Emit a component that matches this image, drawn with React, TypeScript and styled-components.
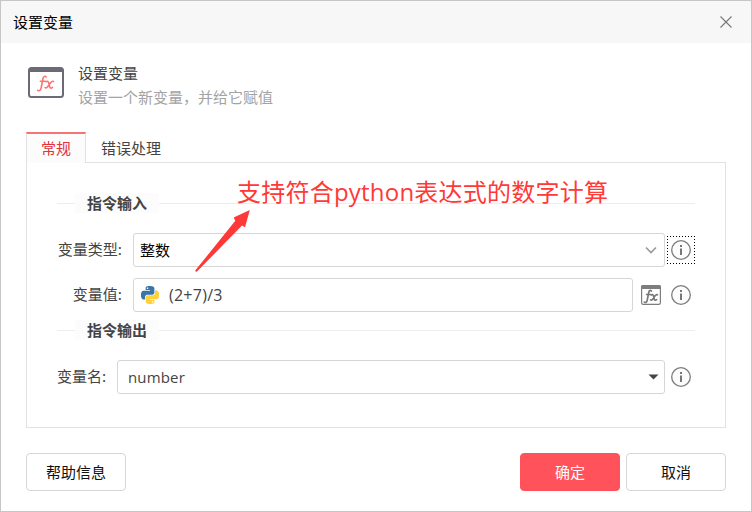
import React from "react";
import styled, { createGlobalStyle } from "styled-components";

const GlobalStyle = createGlobalStyle`
  * { box-sizing: border-box; }
  body { margin: 0; background: #fff; font-family: "Noto Sans", "Noto Sans CJK SC", sans-serif; font-size: 15px; color: #444; }
  button { font: inherit; }
`;

const Dialog = styled.div`
  position: relative;
  width: 752px;
  height: 512px;
  border: 1px solid #c6c6c6;
  background: #fff;
  font-family: "Noto Sans CJK SC", sans-serif;
  line-height: 22px;
  white-space: nowrap;
`;

const TitleBar = styled.header`
  display: flex;
  align-items: center;
  justify-content: space-between;
  height: 42px;
  padding: 0 18px 0 12px;
  background: #f7f7f7;
  color: #000;
`;

const CloseButton = styled.button`
  display: flex;
  padding: 0;
  border: 0;
  background: none;
`;

const Summary = styled.section`
  display: flex;
  gap: 14px;
  height: 88px;
  padding: 19px 0 0 27px;
`;

const SummaryIcon = styled.div`
  padding-top: 5px;
  height: 36px;
`;

const SummaryTitle = styled.div`
  height: 24px;
  color: #444;
`;

const SummaryText = styled.div`
  color: #a3a3a3;
`;

const Tabs = styled.nav`
  display: flex;
  height: 31px;
  margin-left: 25px;
`;

const Tab = styled.div<{ $active?: boolean }>`
  display: flex;
  align-items: center;
  height: 31px;
  padding: 2px 15px 0;
  color: ${(p) => (p.$active ? "#e2303c" : "#444")};
  ${(p) =>
    p.$active &&
    `
    z-index: 1;
    margin-top: 1px;
    padding: 0 14px 1px;
    border: 1px solid #e2e2e2;
    border-top: 2px solid #f47474;
    border-bottom: 0;
    background: #fcfcfc;
  `}
`;

const Panel = styled.main`
  width: 700px;
  height: 266px;
  margin-left: 25px;
  padding: 30px 30px 0;
  border: 1px solid #e2e2e2;
`;

const SectionTitle = styled.div<{ $top?: number }>`
  display: flex;
  align-items: center;
  height: 20px;
  margin-top: ${(p) => p.$top ?? 0}px;
  color: #444;
  font-weight: 700;
  &::before { content: ""; width: 18px; height: 1px; background: #ededed; }
  &::after { content: ""; flex: 1; height: 1px; background: #ededed; }
`;

const SectionLabel = styled.span`
  height: 20px;
  padding: 0 12px;
  background: #fcfcfc;
  line-height: 19px;
`;

const Row = styled.div<{ $top: number }>`
  display: flex;
  align-items: center;
  height: 34px;
  margin-top: ${(p) => p.$top}px;
`;

const Label = styled.label<{ $width: number }>`
  width: ${(p) => p.$width}px;
  padding: 0 11px 2px 0;
  text-align: right;
`;

const Field = styled.div<{ $width: number; $dark?: boolean; $indent: number }>`
  display: flex;
  align-items: center;
  width: ${(p) => p.$width}px;
  height: 34px;
  padding: 0 5px 0 ${(p) => p.$indent}px;
  border: 1px solid #d6d6d6;
  border-radius: 3px;
  color: ${(p) => (p.$dark ? "#000" : "#444")};
`;

const Value = styled.span<{ $latin?: boolean; $numeric?: boolean; $gap?: number }>`
  flex: 1;
  margin-left: ${(p) => p.$gap ?? 0}px;
  font-family: ${(p) => (p.$latin ? `"Open Sans", ` : "")}"Noto Sans CJK SC", sans-serif;
  font-size: ${(p) => (p.$numeric ? 16 : 15)}px;
  letter-spacing: ${(p) => (p.$numeric ? 0.25 : p.$latin ? 0.15 : 0)}px;
`;

const IconButton = styled.button<{ $focused?: boolean; $left?: number }>`
  display: flex;
  align-items: center;
  justify-content: center;
  width: 28px;
  height: 28px;
  margin-left: ${(p) => p.$left ?? 2}px;
  padding: 0;
  border: 1px solid transparent;
  background: none;
  ${(p) =>
    p.$focused &&
    `
    border: 0;
    background:
      repeating-linear-gradient(90deg, #000 0 1.5px, transparent 1.5px 3px) 0 0 / 100% 1px no-repeat,
      repeating-linear-gradient(90deg, #000 0 1.5px, transparent 1.5px 3px) 0 100% / 100% 1px no-repeat,
      repeating-linear-gradient(0deg, #000 0 1.5px, transparent 1.5px 3px) 0 0 / 1px 100% no-repeat,
      repeating-linear-gradient(0deg, #000 0 1.5px, transparent 1.5px 3px) 100% 0 / 1px 100% no-repeat;
  `}
`;

const Footer = styled.footer`
  display: flex;
  gap: 6px;
  margin: 25px 25px 0;
`;

const Button = styled.button<{ $primary?: boolean }>`
  width: 100px;
  height: 38px;
  padding: 0;
  border: 1px solid ${(p) => (p.$primary ? "#ff525b" : "#d6d6d6")};
  border-radius: 4px;
  background: ${(p) => (p.$primary ? "#ff525b" : "#fff")};
  color: ${(p) => (p.$primary ? "#fff" : "#111")};
  font-family: inherit;
  line-height: 22px;
  &:first-child { margin-right: auto; }
`;

const Note = styled.div`
  position: absolute;
  left: 236px;
  top: 173px;
  z-index: 2;
  color: #ff3838;
  font: 24px/36px "Open Sans", "Noto Sans CJK SC", sans-serif;
  letter-spacing: 0.22px;
`;

const NoteArrow = styled.svg`
  position: absolute;
  left: 193px;
  top: 207px;
  z-index: 2;
`;

const InfoIcon = () => (
  <svg width="20" height="20" viewBox="0 0 20 20">
    <circle cx="10" cy="10" r="9.3" fill="#fcfcfc" stroke="#7d7d7d" strokeWidth="1.3" />
    <path d="M9 5h2v2H9zM9 8.5h2V15H9z" fill="#777" />
  </svg>
);

const FxGlyph = ({ scale = 1 }: { scale?: number }) => (
  <g transform={`scale(${scale})`} fill="none" stroke="currentColor" strokeLinecap="round">
    <path d="M9.2 1.5C8 .1 6.5.8 6 3L4.2 12.2C3.8 15 2.2 15.9.7 14.8M3.3 5.7h5" />
    <path d="M9 6.2c1.4-.9 2.3-.2 2.7 1.3l.9 3.6c.4 1.5 1.4 2.1 2.8.8M16.5 5.9c-1.2-.4-2 .2-2.9 1.4l-3 4c-.8 1-1.5 1.4-2.5.8" />
  </g>
);

const FunctionIcon = () => (
  <svg width="36" height="31" viewBox="0 0 36 31" color="#ff7272">
    <rect x="1" y="1" width="34" height="29" rx="2.5" fill="#fff" stroke="#6c6b75" strokeWidth="2" />
    <path d="M1 5V3q0-2 2-2h30q2 0 2 2v2z" fill="#6c6b75" />
    <g transform="translate(9 8.5)" strokeWidth="1.6"><FxGlyph /></g>
  </svg>
);

const ExpressionIcon = () => (
  <svg width="20" height="20" viewBox="0 0 20 20" color="#777">
    <rect x=".6" y=".6" width="18.8" height="18.8" rx="1.6" fill="#fff" stroke="#7d7d7d" strokeWidth="1.2" />
    <path d="M0 4V2q0-2 2-2h16q2 0 2 2v2z" fill="#7d7d7d" />
    <g transform="translate(2.8 4.8)" strokeWidth="2"><FxGlyph scale={0.83} /></g>
  </svg>
);

const PythonIcon = () => (
  <svg width="18" height="18" viewBox="0 0 24 24">
    <path fill="#3776ab" d="M14.25.18l.9.2.73.26.59.3.45.32.34.34.25.34.16.33.1.3.04.26.02.2-.01.13V8.5l-.05.63-.13.55-.21.46-.26.38-.3.31-.33.25-.35.19-.35.14-.33.1-.3.07-.26.04-.21.02H8.77l-.69.05-.59.14-.5.22-.41.27-.33.32-.27.35-.2.36-.15.37-.1.35-.07.32-.04.27-.02.21v3.06H3.17l-.21-.03-.28-.07-.32-.12-.35-.18-.36-.26-.36-.36-.35-.46-.32-.59-.28-.73-.21-.88-.14-1.05-.05-1.23.06-1.22.16-1.04.24-.87.32-.71.36-.57.4-.44.42-.33.42-.24.4-.16.36-.1.32-.05.24-.01h.16l.06.01h8.16v-.83H6.18l-.01-2.75-.02-.37.05-.34.11-.31.17-.28.25-.26.31-.23.38-.2.44-.18.51-.15.58-.12.64-.1.71-.06.77-.04.84-.02 1.27.05zm-6.3 1.98l-.23.33-.08.41.08.41.23.34.33.22.41.09.41-.09.33-.22.23-.34.08-.41-.08-.41-.23-.33-.33-.22-.41-.09-.41.09z" />
    <path fill="#ffd03a" d="M21.1 6.11l.28.06.32.12.35.18.36.27.36.35.35.47.32.59.28.73.21.88.14 1.04.05 1.23-.06 1.23-.16 1.04-.24.86-.32.71-.36.57-.4.45-.42.33-.42.24-.4.16-.36.09-.32.05-.24.02-.16-.01h-8.22v.82h5.84l.01 2.76.02.36-.05.34-.11.31-.17.29-.25.25-.31.24-.38.2-.44.17-.51.15-.58.13-.64.09-.71.07-.77.04-.84.01-1.27-.04-1.07-.14-.9-.2-.73-.25-.59-.3-.45-.33-.34-.34-.25-.34-.16-.33-.1-.3-.04-.25-.02-.2.01-.13v-5.34l.05-.64.13-.54.21-.46.26-.38.3-.32.33-.24.35-.2.35-.14.33-.1.3-.06.26-.04.21-.02.13-.01h5.84l.69-.05.59-.14.5-.21.41-.28.33-.32.27-.35.2-.36.15-.36.1-.35.07-.32.04-.28.02-.21V6.07h2.09l.14.01zm-6.47 14.25l-.23.33-.08.41.08.41.23.33.33.23.41.08.41-.08.33-.23.23-.33.08-.41-.08-.41-.23-.33-.33-.23-.41-.08-.41.08z" />
  </svg>
);

export default function App() {
  return (
    <>
      <GlobalStyle />
      <Dialog>
        <TitleBar>
          设置变量
          <CloseButton aria-label="关闭">
            <svg width="14" height="14" viewBox="0 0 14 14">
              <path d="M1.5 1.5l11 11M12.5 1.5l-11 11" stroke="#777" strokeWidth="1.1" />
            </svg>
          </CloseButton>
        </TitleBar>
        <Summary>
          <SummaryIcon><FunctionIcon /></SummaryIcon>
          <div>
            <SummaryTitle>设置变量</SummaryTitle>
            <SummaryText>设置一个新变量，并给它赋值</SummaryText>
          </div>
        </Summary>
        <Tabs>
          <Tab $active>常规</Tab>
          <Tab>错误处理</Tab>
        </Tabs>
        <Panel>
          <SectionTitle><SectionLabel>指令输入</SectionLabel></SectionTitle>
          <Row $top={20}>
            <Label $width={76}>变量类型:</Label>
            <Field $width={532} $indent={6} $dark>
              <Value>整数</Value>
              <svg width="16" height="16" viewBox="0 0 16 16">
                <path d="M3 5.5l5 5 5-5" fill="none" stroke="#999" strokeWidth="1.6" />
              </svg>
            </Field>
            <IconButton $focused aria-label="变量类型"><InfoIcon /></IconButton>
          </Row>
          <Row $top={11}>
            <Label $width={76}>变量值:</Label>
            <Field $width={500} $indent={7}>
              <PythonIcon />
              <Value $latin $numeric $gap={10}>(2+7)/3</Value>
            </Field>
            <IconButton $left={4} aria-label="表达式"><ExpressionIcon /></IconButton>
            <IconButton aria-label="变量值"><InfoIcon /></IconButton>
          </Row>
          <SectionTitle $top={8}><SectionLabel>指令输出</SectionLabel></SectionTitle>
          <Row $top={20}>
            <Label $width={60}>变量名:</Label>
            <Field $width={548} $indent={10}>
              <Value $latin>number</Value>
              <svg width="11" height="6" viewBox="0 0 11 6"><path d="M.5.5h10l-5 5z" fill="#444" /></svg>
            </Field>
            <IconButton aria-label="变量名"><InfoIcon /></IconButton>
          </Row>
        </Panel>
        <Footer>
          <Button>帮助信息</Button>
          <Button $primary>确定</Button>
          <Button>取消</Button>
        </Footer>
        <Note>支持符合python表达式的数字计算</Note>
        <NoteArrow width="60" height="66" viewBox="194 208 60 66">
          <path d="M249.8 210L233.7 217.5l1.6 3.3L195.2 270.6q.4 1.4 1.6 1.2L242 225.5l3 1.8z" fill="#ff3838" />
        </NoteArrow>
      </Dialog>
    </>
  );
}
